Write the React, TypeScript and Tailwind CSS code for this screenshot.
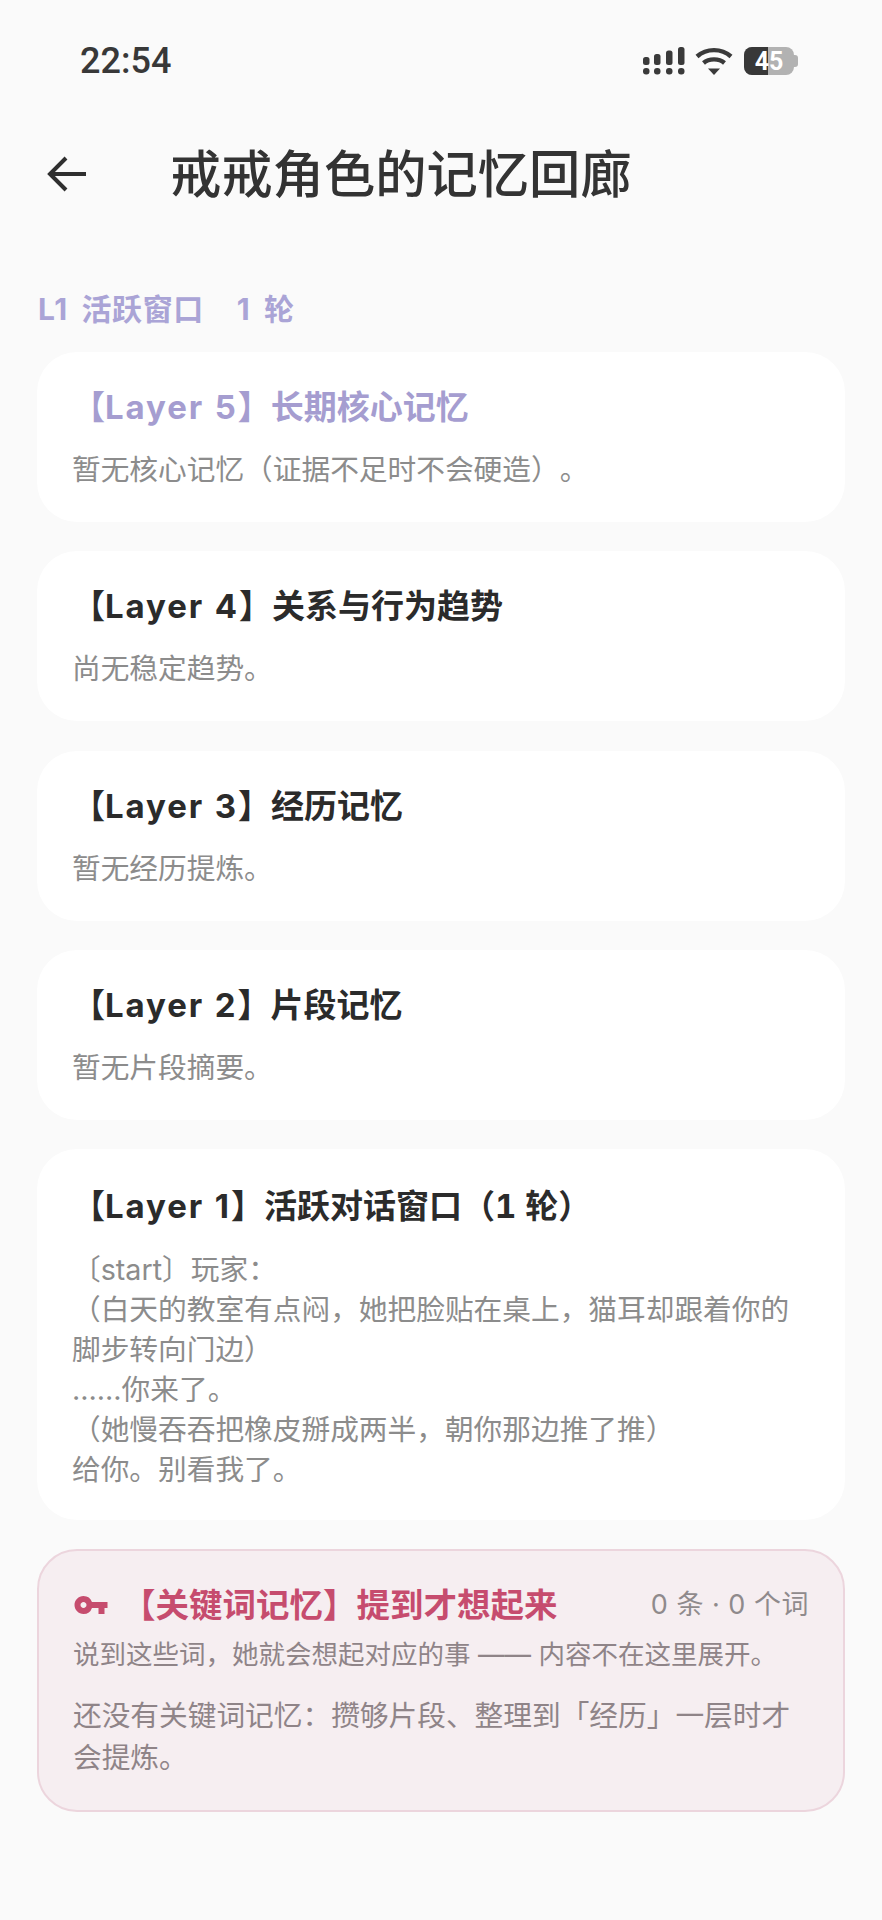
import { MdVpnKey } from "react-icons/md";

const layers = [
  { name: "Layer 5", title: "长期核心记忆", body: "暂无核心记忆（证据不足时不会硬造）。", accent: true },
  { name: "Layer 4", title: "关系与行为趋势", body: "尚无稳定趋势。" },
  { name: "Layer 3", title: "经历记忆", body: "暂无经历提炼。" },
  { name: "Layer 2", title: "片段记忆", body: "暂无片段摘要。" },
];

const active = [
  "〔start〕玩家：",
  "（白天的教室有点闷，她把脸贴在桌上，猫耳却跟着你的脚步转向门边）",
  "……你来了。",
  "（她慢吞吞把橡皮掰成两半，朝你那边推了推）",
  "给你。别看我了。",
];

function StatusIcons() {
  return (
    <div className="flex items-center">
      {/* signal */}
      <svg width="43" height="28" viewBox="0 0 43 28" fill="#3a3a3a">
        <rect x="1" y="21" width="6.5" height="6.5" rx="3" />
        <rect x="12" y="21" width="6.5" height="6.5" rx="3" />
        <rect x="24" y="21" width="6.5" height="6.5" rx="3" />
        <rect x="36" y="21" width="6.5" height="6.5" rx="3" />
        <rect x="1" y="10" width="6.5" height="8" rx="2.5" />
        <rect x="12" y="7" width="6.5" height="11" rx="2.5" />
        <rect x="24" y="3.5" width="6.5" height="14.5" rx="2.5" />
        <rect x="36" y="0" width="6.5" height="18" rx="2.5" />
      </svg>
      {/* wifi */}
      <svg className="ml-[10px]" width="38" height="28" viewBox="0 0 38 28" fill="none" stroke="#3a3a3a" strokeWidth="4.4">
        <path d="M2 9.5 C11.5 1 26.5 1 36 9.5" />
        <path d="M8.5 16 C14 11.2 24 11.2 29.5 16" />
        <path d="M13 21.5 L25 21.5 L19 28 Z" fill="#3a3a3a" stroke="none" />
      </svg>
      {/* battery */}
      <div className="ml-[11px] flex items-center">
        <div className="relative flex h-[28px] w-[50px] items-center justify-center overflow-hidden rounded-[8px] bg-[#b2b2b2]">
          <div className="absolute inset-y-0 left-0 w-[24px] bg-[#383838]" />
          <span className="relative font-['Roboto',sans-serif] text-[25px] leading-none font-bold text-white">45</span>
        </div>
        <div className="h-[12px] w-[4px] rounded-r-[3px] bg-[#b2b2b2]" />
      </div>
    </div>
  );
}

function LayerName({ name }: { name: string }) {
  return <span className="tracking-[1.9px] [word-spacing:1px]">{name}</span>;
}

function LayerCard({ name, title, body, accent }: { name: string; title: string; body: string; accent?: boolean }) {
  return (
    <section className="rounded-[40px] bg-white px-[35px] pt-[35px] pb-[32px]">
      <h2 className={`text-[33px] leading-[40px] font-bold ${accent ? "text-[#a59dd0]" : "text-[#2b2b2b]"}`}>
        【<LayerName name={name} />】{title}
      </h2>
      <p className="mt-[23px] text-[28.7px] leading-[40px] text-[#8c8c8c]">{body}</p>
    </section>
  );
}

export default function App() {
  return (
    <div className="h-[1920px] w-[882px] overflow-hidden bg-[#fafafa] font-['Inter','Noto_Sans_CJK_SC',sans-serif] [text-spacing-trim:space-all]">
      <div className="flex items-center justify-between pt-[44px] pr-[84px] pl-[80px]">
        <span className="font-['Roboto',sans-serif] text-[36px] leading-[34px] font-medium text-[#383838]">22:54</span>
        <StatusIcons />
      </div>

      <header className="mt-[65px] flex items-center pl-[47px]">
        <svg width="40" height="36" viewBox="0 0 40 36" fill="none" stroke="#2f2f2f" strokeWidth="4">
          <path d="M39 18 H3" />
          <path d="M19 2 L3 18 L19 34" />
        </svg>
        <h1 className="ml-[83px] text-[51.3px] leading-[62px] font-medium text-[#333333]">戒戒角色的记忆回廊</h1>
      </header>

      <div className="mt-[84px] pl-[38px] text-[30px] leading-[40px] font-bold tracking-[0.6px] whitespace-pre text-[#aaa4d6] [word-spacing:6px]">
        <span>L1 活跃窗口</span>
        <span className="ml-[33px]">1 轮</span>
      </div>

      <main className="mt-[23px] flex flex-col gap-[29.3px] pr-[37px] pl-[37px]">
        {layers.map((l) => (
          <LayerCard key={l.name} name={l.name} title={l.title} body={l.body} accent={l.accent} />
        ))}

        <section className="rounded-[40px] bg-white px-[35px] pt-[37px] pb-[30px]">
          <h2 className="text-[33px] leading-[40px] font-bold text-[#2b2b2b]">
            【<LayerName name="Layer 1" />】活跃对话窗口（<span className="tabular-nums">1 轮</span>）
          </h2>
          <div className="mt-[24px] text-[28.7px] leading-[40px] text-[#8c8c8c]">
            {active.map((line) => (
              <p key={line}>{line}</p>
            ))}
          </div>
        </section>

        <section className="rounded-[40px] border-2 border-[#ecd5dd] bg-[#f6eef1] px-[34px] pt-[32px] pb-[30.5px]">
          <div className="flex items-center justify-between">
            <div className="flex items-center">
              <MdVpnKey className="text-[#c64c6e]" size={36} />
              <h2 className="ml-[13px] text-[33.5px] leading-[44px] font-bold text-[#c64c6e]">【关键词记忆】提到才想起来</h2>
            </div>
            <span className="text-[27px] tracking-[0.5px] text-[#8f8a8c]">0 条 · 0 个词</span>
          </div>
          <p className="mt-[7px] text-[26.5px] leading-[40px] text-[#8f8488]">说到这些词，她就会想起对应的事 —— 内容不在这里展开。</p>
          <p className="mt-[21px] text-[28.7px] leading-[42px] text-[#8f8488]">还没有关键词记忆：攒够片段、整理到「经历」一层时才会提炼。</p>
        </section>
      </main>
    </div>
  );
}
